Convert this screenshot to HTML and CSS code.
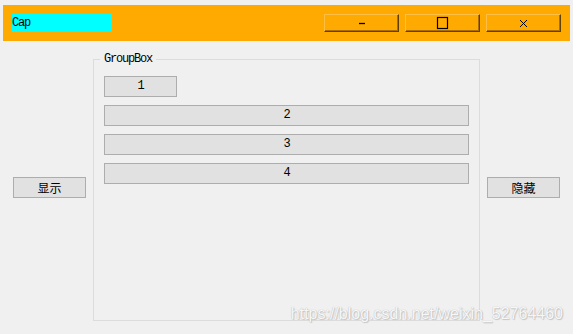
FILE: index.html
```html
<!DOCTYPE html>
<html lang="zh-CN">
<head>
    <meta charset="UTF-8" />
    <title>Cap</title>
    <link rel="stylesheet" href="styles.css">
</head>
<body>
<div class="titlebar">
    <div class="caption">Cap</div>
    <div class="tb-controls">
        <button class="tb-btn" title="最小化">
            <svg width="8" height="8" viewBox="0 0 8 8"><line x1="1" y1="4.5" x2="7" y2="4.5" stroke="#000" stroke-width="1.3"/></svg>
        </button>
        <button class="tb-btn" title="最大化">
            <svg width="13" height="14" viewBox="0 0 13 14"><rect x="1.5" y="1.5" width="10" height="11" fill="none" stroke="#000" stroke-width="1.2"/></svg>
        </button>
        <button class="tb-btn" title="关闭">
            <svg width="9" height="9" viewBox="0 0 9 9"><path d="M1 1 L8 8 M8 1 L1 8" stroke="#000" stroke-width="1"/></svg>
        </button>
    </div>
</div>

<div class="content">
    <button class="btn side-btn">显示</button>
    <div class="group">
        <span class="group-title">GroupBox</span>
        <button class="btn small-btn">1</button>
        <button class="btn">2</button>
        <button class="btn">3</button>
        <button class="btn">4</button>
    </div>
    <button class="btn side-btn">隐藏</button>
</div>

<div class="watermark">https://blog.csdn.net/weixin_52764460</div>
</body>
</html>
```

FILE: styles.css
```css
body {
    margin: 0;
    padding: 5px 3px 0;
    background: #f0f0f0;
    font-family: "Liberation Mono", "Noto Sans CJK SC", monospace;
    font-size: 12px;
    letter-spacing: -1.2px;
    color: #000;
    position: relative;
    height: 329px;
    overflow: hidden;
}
button {
    font: inherit;
    letter-spacing: inherit;
    color: inherit;
    margin: 0;
    padding: 0;
    cursor: default;
}
.titlebar {
    display: flex;
    justify-content: space-between;
    align-items: center;
    background: #ffaa00;
    padding: 9px;
}
.caption {
    width: 100px;
    height: 18px;
    line-height: 18px;
    background: #00ffff;
}
.tb-controls {
    display: flex;
    gap: 6px;
}
.tb-btn {
    width: 75px;
    height: 18px;
    box-sizing: border-box;
    background: #ffaa00;
    border: 1px solid #ffbe45;
    border-right-color: #5e4000;
    border-bottom-color: #5e4000;
    box-shadow: inset -1px -1px 0 #a87000;
    display: flex;
    align-items: center;
    justify-content: center;
}
.tb-btn svg { display: block; }
.content {
    display: flex;
    align-items: center;
    gap: 7px;
    padding: 18px 10px 0;
}
.btn {
    height: 21px;
    box-sizing: border-box;
    border: 1px solid #adadad;
    background: #e1e1e1;
    text-align: center;
    line-height: 19px;
}
.side-btn {
    width: 73px;
    margin-bottom: 6px;
    font-family: "Noto Sans CJK SC", sans-serif;
    font-size: 12px;
    letter-spacing: 0;
}
.group {
    position: relative;
    width: 387px;
    height: 262px;
    box-sizing: border-box;
    border: 1px solid #dcdcdc;
    padding: 16px 10px 0;
    display: flex;
    flex-direction: column;
    gap: 8px;
}
.group-title {
    position: absolute;
    top: -7px;
    left: 6px;
    padding: 0 4px;
    line-height: 13px;
    background: #f0f0f0;
}
.small-btn { width: 73px; }
.watermark {
    position: absolute;
    top: 305px;
    right: 10px;
    font-family: "Liberation Sans", sans-serif;
    font-size: 16px;
    letter-spacing: 0;
    line-height: 18px;
    color: rgba(255, 255, 255, 0.92);
    text-shadow: 0 0 1px #a8a8a8, 1px 1px 1px #c8c8c8;
}
```
